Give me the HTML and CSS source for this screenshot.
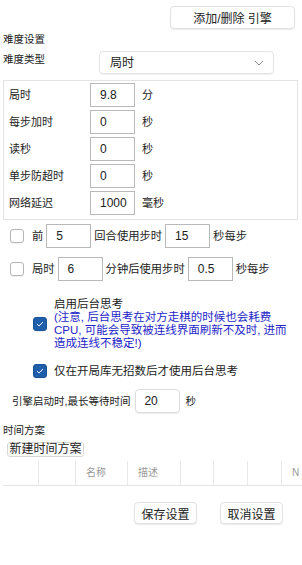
FILE: index.html
```html
<!DOCTYPE html>
<html lang="zh">
<head>
  <meta charset="UTF-8">
  <title>难度设置</title>
  <link rel="stylesheet" href="styles.css">
</head>
<body>
  <div class="topbar">
    <button class="btn engine">添加/删除 引擎</button>
  </div>

  <div class="title">难度设置</div>
  <div class="type-row">
    <span class="type-label">难度类型</span>
    <div class="select">
      <span>局时</span>
      <svg width="10" height="6" viewBox="0 0 10 6"><path d="M1 1 L5 5 L9 1" fill="none" stroke="#8a8a8a" stroke-width="1"/></svg>
    </div>
  </div>

  <div class="group">
    <div class="row"><span class="label">局时</span><span class="input">9.8</span><span class="unit">分</span></div>
    <div class="row"><span class="label">每步加时</span><span class="input">0</span><span class="unit">秒</span></div>
    <div class="row"><span class="label">读秒</span><span class="input">0</span><span class="unit">秒</span></div>
    <div class="row"><span class="label">单步防超时</span><span class="input">0</span><span class="unit">秒</span></div>
    <div class="row"><span class="label">网络延迟</span><span class="input">1000</span><span class="unit">毫秒</span></div>
  </div>

  <div class="step-row first">
    <span class="check"></span>
    <span class="txt">前</span>
    <span class="input">5</span>
    <span class="txt">回合使用步时</span>
    <span class="input">15</span>
    <span class="txt">秒每步</span>
  </div>
  <div class="step-row second">
    <span class="check"></span>
    <span class="txt">局时</span>
    <span class="input">6</span>
    <span class="txt">分钟后使用步时</span>
    <span class="input">0.5</span>
    <span class="txt">秒每步</span>
  </div>

  <div class="bg-row">
    <span class="check on"><svg width="8" height="6" viewBox="0 0 8 6"><path d="M1 3 L3 5 L7 1" fill="none" stroke="#fff" stroke-width="1"/></svg></span>
    <div class="bg-text">
      <div>启用后台思考</div>
      <div class="note">(注意, 后台思考在对方走棋的时候也会耗费<br>CPU, 可能会导致被连线界面刷新不及时, 进而<br>造成连线不稳定!)</div>
    </div>
  </div>
  <div class="book-row">
    <span class="check on"><svg width="8" height="6" viewBox="0 0 8 6"><path d="M1 3 L3 5 L7 1" fill="none" stroke="#fff" stroke-width="1"/></svg></span>
    <span>仅在开局库无招数后才使用后台思考</span>
  </div>

  <div class="wait-row">
    <span>引擎启动时,最长等待时间</span>
    <span class="spin">20</span>
    <span>秒</span>
  </div>

  <div class="title plan">时间方案</div>
  <button class="btn small">新建时间方案</button>

  <div class="table">
    <div class="th w36"></div>
    <div class="th w37"></div>
    <div class="th w52">名称</div>
    <div class="th w53">描述</div>
    <div class="th w33"></div>
    <div class="th w34"></div>
    <div class="th w34"></div>
    <div class="th last">N</div>
  </div>

  <div class="actions">
    <button class="btn act">保存设置</button>
    <button class="btn act">取消设置</button>
  </div>
</body>
</html>
```

FILE: styles.css
```css
body{
	margin: 0;
	width: 302px;
	height: 565px;
	overflow: hidden;
	background-color: #fff;
	color: #222;
	font-family: "Liberation Sans", "Noto Sans CJK SC", sans-serif;
	font-size: 11px;
	line-height: 14px;
}
.btn{
	font-family: "Liberation Sans", "Noto Sans CJK SC", sans-serif;
	font-size: 12px;
	color: #222;
	background-color: #fff;
	border: 1px solid #e2e2e2;
	border-radius: 4px;
	box-shadow: 0 1px 1px rgba(0,0,0,0.08);
	padding: 0;
}
.topbar{
	display: flex;
	justify-content: flex-end;
	padding: 6px 7px 0 0;
}
.engine{
	width: 125px;
	height: 23px;
}
.title{
	margin: 3px 0 0 3px;
	font-size: 10.5px;
}
.type-row{
	display: flex;
	margin-top: 5px;
	padding-left: 3px;
	font-size: 10.5px;
}
.type-label{
	width: 96px;
	margin-top: 1px;
}
.select{
	display: flex;
	align-items: center;
	justify-content: space-between;
	width: 175px;
	height: 23px;
	box-sizing: border-box;
	padding: 0 9px 0 10px;
	border: 1px solid #e4e4e4;
	border-radius: 4px;
	box-shadow: 0 1px 1px rgba(0,0,0,0.06);
	font-size: 12px;
}
.group{
	display: flex;
	flex-direction: column;
	gap: 3px;
	margin: 6px 4px 0 3px;
	padding: 2px 0 4px 5px;
	border: 1px solid #e3e3e3;
}
.row{
	display: flex;
	align-items: center;
	height: 24px;
}
.label{
	width: 81px;
}
.input{
	display: flex;
	align-items: center;
	box-sizing: border-box;
	width: 45px;
	height: 24px;
	padding-left: 9px;
	border: 1px solid #b9b9b9;
	font-size: 12px;
}
.unit{
	margin-left: 7px;
}
.step-row{
	display: flex;
	align-items: center;
	height: 24px;
	padding-left: 10px;
	font-size: 11.3px;
}
.step-row.first{
	margin-top: 4px;
}
.step-row.second{
	margin-top: 9px;
}
.step-row .txt{
	margin: 0 3px;
}
.step-row .check{
	margin-right: 5px;
}
.check{
	display: flex;
	align-items: center;
	justify-content: center;
	flex: none;
	box-sizing: border-box;
	width: 14px;
	height: 14px;
	border: 1px solid #b5b5b5;
	border-radius: 3px;
	box-shadow: 0 1px 1px rgba(0,0,0,0.06);
}
.check.on{
	background-color: #1f5ea8;
	border-color: #1a5296;
}
.bg-row{
	display: flex;
	align-items: center;
	gap: 7px;
	margin-top: 17px;
	padding-left: 33px;
	font-size: 11.5px;
}
.bg-text{
	line-height: 13px;
}
.note{
	color: #2525c9;
}
.book-row{
	display: flex;
	align-items: center;
	gap: 7px;
	margin-top: 14px;
	padding-left: 33px;
	font-size: 11.5px;
}
.wait-row{
	display: flex;
	align-items: center;
	gap: 5px;
	margin-top: 11px;
	padding-left: 12px;
	font-size: 10.5px;
}
.spin{
	display: flex;
	align-items: center;
	box-sizing: border-box;
	width: 45px;
	height: 24px;
	padding-left: 8px;
	border: 1px solid #dcdcdc;
	border-radius: 4px;
	box-shadow: 0 1px 1px rgba(0,0,0,0.08);
	font-size: 12px;
}
.title.plan{
	margin-top: 10px;
}
.small{
	display: block;
	margin: 5px 0 0 7px;
	width: 77px;
	height: 15px;
	line-height: 13px;
	border-color: #d6d6d6;
	border-radius: 3px;
	box-shadow: none;
}
.table{
	display: flex;
	margin: 4px 0 0 3px;
	height: 24px;
	border-bottom: 1px solid #e3e3e3;
	color: #999;
	font-size: 10px;
}
.th{
	display: flex;
	align-items: center;
	flex: none;
	box-sizing: border-box;
	padding-left: 10px;
	border-right: 1px solid #e8e8e8;
}
.w36{ width: 36px; }
.w37{ width: 37px; }
.w52{ width: 52px; }
.w53{ width: 53px; }
.w33{ width: 33px; }
.w34{ width: 34px; }
.th.last{
	flex: 1;
	border-right: none;
}
.actions{
	display: flex;
	justify-content: flex-end;
	gap: 23px;
	margin-top: 16px;
	padding-right: 19px;
}
.act{
	width: 63px;
	height: 22px;
}
```
